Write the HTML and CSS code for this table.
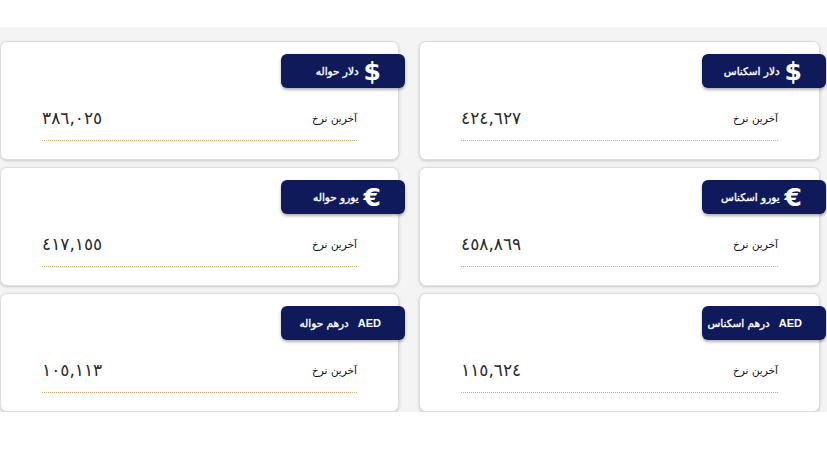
FILE: index.html
```html
<!DOCTYPE html>
<html lang="fa" dir="rtl">
<head>
<meta charset="utf-8">
<link rel="stylesheet" href="styles.css">
</head>
<body>
<div class="page">
  <div class="grid">
    <div class="card">
      <div class="badge"><span class="sym">$</span><span class="title">دلار اسکناس</span></div>
      <div class="row"><span class="label">آخرین نرخ</span><span class="value">٤٢٤,٦٢٧</span></div>
      <div class="dots"></div>
    </div>
    <div class="card">
      <div class="badge"><span class="sym">$</span><span class="title">دلار حواله</span></div>
      <div class="row"><span class="label">آخرین نرخ</span><span class="value">٣٨٦,٠٢٥</span></div>
      <div class="dots"></div>
    </div>
    <div class="card">
      <div class="badge"><span class="sym euro">€</span><span class="title">یورو اسکناس</span></div>
      <div class="row"><span class="label">آخرین نرخ</span><span class="value">٤٥٨,٨٦٩</span></div>
      <div class="dots"></div>
    </div>
    <div class="card">
      <div class="badge"><span class="sym euro">€</span><span class="title">یورو حواله</span></div>
      <div class="row"><span class="label">آخرین نرخ</span><span class="value">٤١٧,١٥٥</span></div>
      <div class="dots"></div>
    </div>
    <div class="card">
      <div class="badge"><span class="aed">AED</span><span class="title">درهم اسکناس</span></div>
      <div class="row"><span class="label">آخرین نرخ</span><span class="value">١١٥,٦٢٤</span></div>
      <div class="dots"></div>
    </div>
    <div class="card">
      <div class="badge"><span class="aed">AED</span><span class="title">درهم حواله</span></div>
      <div class="row"><span class="label">آخرین نرخ</span><span class="value">١٠٥,١١٣</span></div>
      <div class="dots"></div>
    </div>
  </div>
</div>
</body>
</html>
```
FILE: styles.css
```css
html, body {
  margin: 0;
  padding: 0;
  background: #ffffff;
  font-family: "DejaVu Sans", sans-serif;
}
.page {
  margin-top: 27px;
  padding-top: 14px;
  background: #f4f4f4;
  width: 827px;
  overflow: hidden;
}
.grid {
  display: grid;
  grid-template-columns: 401px 399px;
  column-gap: 20px;
  row-gap: 7px;
  width: 820px;
  margin-right: 7px;
}
.card {
  background: #ffffff;
  border: 1px solid #dedede;
  border-radius: 7px;
  box-shadow: 0 1px 3px rgba(0, 0, 0, 0.18);
  padding: 12px 0 0;
  display: flex;
  flex-direction: column;
  box-sizing: border-box;
  height: 119px;
}
.badge {
  align-self: flex-start;
  margin-right: -7px;
  width: 124px;
  height: 34px;
  box-sizing: border-box;
  background: #0f1a5b;
  border-radius: 6px;
  box-shadow: 0 2px 3px rgba(0, 0, 0, 0.3);
  color: #ffffff;
  display: flex;
  align-items: center;
  gap: 5px;
  padding-right: 24px;
  white-space: nowrap;
}
.sym {
  font-family: "DejaVu Sans", sans-serif;
  font-weight: bold;
  font-size: 25px;
  line-height: 1;
}
.aed {
  font-family: "Liberation Sans", sans-serif;
  font-weight: bold;
  font-size: 11px;
  margin-left: 4px;
}
.title {
  font-size: 10.5px;
  -webkit-text-stroke: 0.35px #ffffff;
}
.row {
  margin: 18px 41px 0;
  display: flex;
  justify-content: space-between;
  align-items: center;
  height: 24px;
}
.dots {
  margin: 10px 41px 0;
  height: 1px;
  background-image: repeating-linear-gradient(to right, #d4ad6c 0 1px, transparent 1px 2px);
}
.label {
  font-size: 10.5px;
  color: #111111;
}
.value {
  font-size: 17px;
  color: #2a2a2a;
  letter-spacing: 0.5px;
}
```
